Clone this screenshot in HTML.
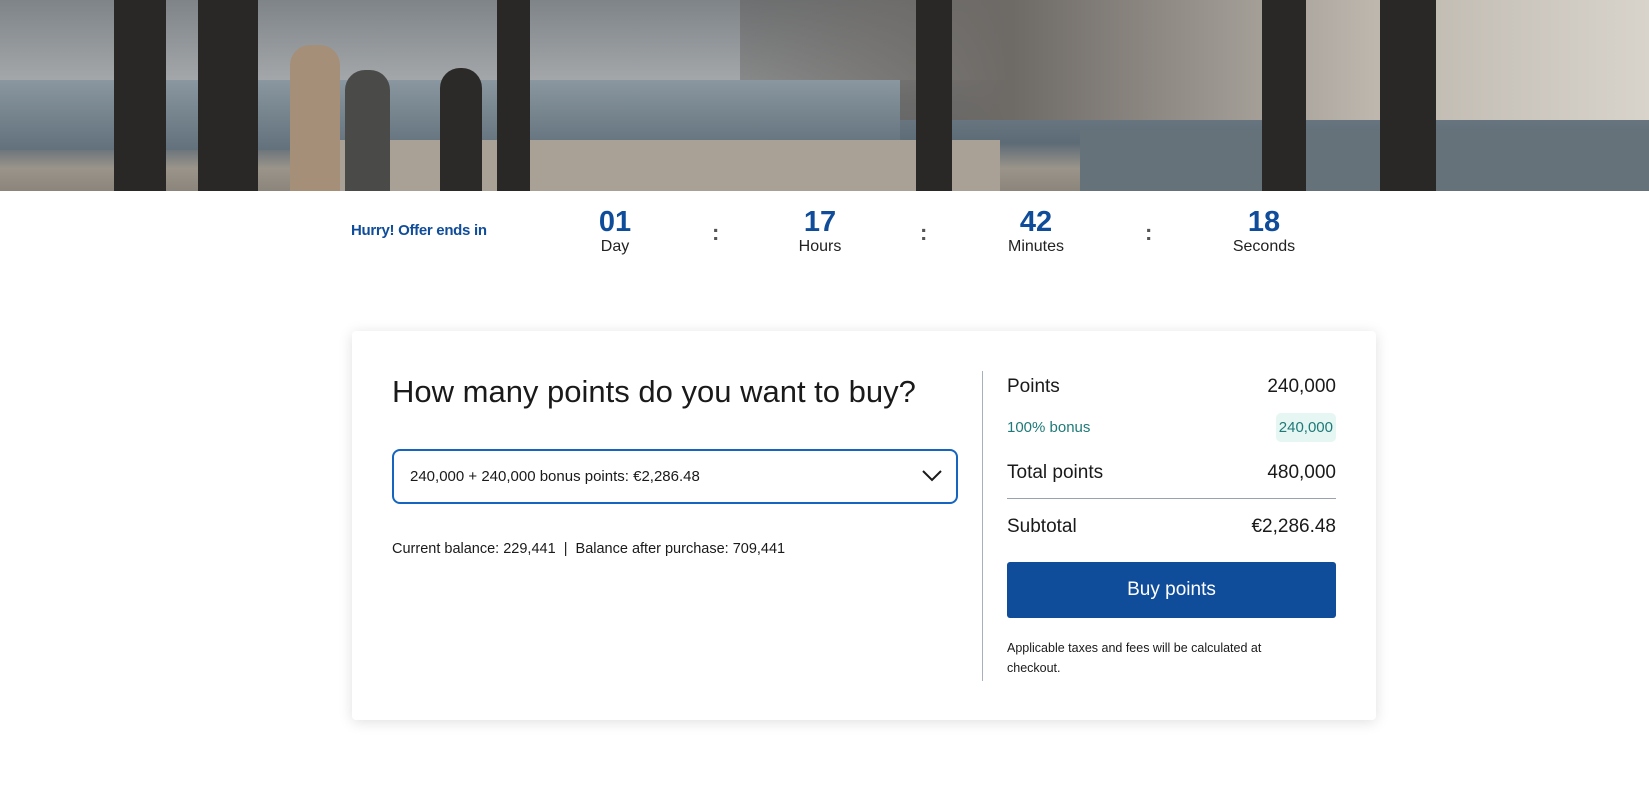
<!DOCTYPE html>
<html><head><meta charset="utf-8"><style>
*{box-sizing:border-box;margin:0;padding:0}
body{width:1649px;height:809px;background:#fff;font-family:"Liberation Sans",sans-serif;color:#1a1a1a;position:relative;overflow:hidden}
.hero{position:absolute;left:0;top:0;width:1649px;height:191px;background:linear-gradient(180deg,#8a8f94 0%,#9aa0a5 35%,#6f7c86 55%,#5d6b76 75%,#9a948a 88%,#8c857b 100%);overflow:hidden}
.t{position:absolute;top:0;height:191px;background:#2a2826}
.lbl{position:absolute;left:351px;top:222px;color:#0f4c9a;font-weight:bold;font-size:15px;letter-spacing:-0.3px}
.u{position:absolute;top:206px;text-align:center;width:120px;margin-left:-60px}
.u b{display:block;color:#0f4c9a;font-size:29px;font-weight:bold;line-height:32px}
.u span{display:block;font-size:16px;line-height:18px;color:#222}
.col{position:absolute;top:220px;font-size:22px;font-weight:bold;color:#555}
.card{position:absolute;left:352px;top:331px;width:1024px;height:389px;background:#fff;border-radius:4px;box-shadow:0 2px 14px rgba(0,0,0,.13)}
h1{position:absolute;left:40px;top:43px;font-size:31px;font-weight:normal;color:#1a1a1a}
.sel{position:absolute;left:40px;top:118px;width:566px;height:55px;border:2px solid #1565c0;border-radius:8px;font-size:15px;padding:17px 16px}
.bal{position:absolute;left:40px;top:210px;font-size:14.5px}
.vl{position:absolute;left:630px;top:40px;width:1px;height:310px;background:#a7b1bc}
.r{position:absolute;left:655px;width:329px;display:flex;justify-content:space-between;font-size:19px}
.hr{position:absolute;left:655px;top:167px;width:329px;height:1px;background:#9aa3ad}
.btn{position:absolute;left:655px;top:231px;width:329px;height:56px;background:#0f4c9a;color:#fff;border-radius:3px;font-size:19px;text-align:center;line-height:56px}
.note{position:absolute;left:655px;top:307px;width:300px;font-size:12.5px;line-height:20px}
</style></head><body>
<div class="hero">
<div style="position:absolute;left:0;top:0;width:100%;height:80px;background:linear-gradient(180deg,#7f8488,#a3a7aa)"></div>
<div style="position:absolute;left:740px;top:0;width:909px;height:120px;background:linear-gradient(90deg,rgba(70,65,60,.3),#6e6a66 30%,#bdb7ae 70%,#d8d3cb)"></div>
<div style="position:absolute;left:0;top:80px;width:900px;height:70px;background:linear-gradient(180deg,#8a97a0,#62717c)"></div>
<div style="position:absolute;left:300px;top:140px;width:700px;height:51px;background:#aaa196"></div>
<div style="position:absolute;left:1080px;top:130px;width:569px;height:61px;background:#66727a"></div>
<div class="t" style="left:114px;width:52px"></div>
<div class="t" style="left:198px;width:60px"></div>
<div class="t" style="left:497px;width:33px"></div>
<div class="t" style="left:916px;width:36px"></div>
<div class="t" style="left:1262px;width:44px"></div>
<div class="t" style="left:1380px;width:56px"></div>
<div style="position:absolute;left:290px;top:45px;width:50px;height:146px;background:#a58f78;border-radius:20px 20px 0 0"></div>
<div style="position:absolute;left:345px;top:70px;width:45px;height:121px;background:#4a4a48;border-radius:20px 20px 0 0"></div>
<div style="position:absolute;left:440px;top:68px;width:42px;height:123px;background:#2b2a29;border-radius:20px 20px 0 0"></div>
</div>
<div class="lbl">Hurry! Offer ends in</div>
<div class="u" style="left:615px"><b>01</b><span>Day</span></div>
<div class="col" style="left:712px">:</div>
<div class="u" style="left:820px"><b>17</b><span>Hours</span></div>
<div class="col" style="left:920px">:</div>
<div class="u" style="left:1036px"><b>42</b><span>Minutes</span></div>
<div class="col" style="left:1145px">:</div>
<div class="u" style="left:1264px"><b>18</b><span>Seconds</span></div>
<div class="card">
<h1>How many points do you want to buy?</h1>
<div class="sel">240,000 + 240,000 bonus points: €2,286.48
<svg style="position:absolute;right:14px;top:19px" width="20" height="12" viewBox="0 0 20 12"><path d="M1 1l9 9 9-9" fill="none" stroke="#1a1a1a" stroke-width="2"/></svg></div>
<div class="bal">Current balance: 229,441 &nbsp;|&nbsp; Balance after purchase: 709,441</div>
<div class="vl"></div>
<div class="r" style="top:45px"><span>Points</span><span>240,000</span></div>
<div class="r" style="top:82px;font-size:15px;color:#1e7a78;align-items:center"><span>100% bonus</span><span style="background:#e6f6f3;padding:6px 3px;border-radius:5px">240,000</span></div>
<div class="r" style="top:131px"><span>Total points</span><span>480,000</span></div>
<div class="hr"></div>
<div class="r" style="top:185px"><span>Subtotal</span><span>€2,286.48</span></div>
<div class="btn">Buy points</div>
<div class="note">Applicable taxes and fees will be calculated at checkout.</div>
</div>
</body></html>
